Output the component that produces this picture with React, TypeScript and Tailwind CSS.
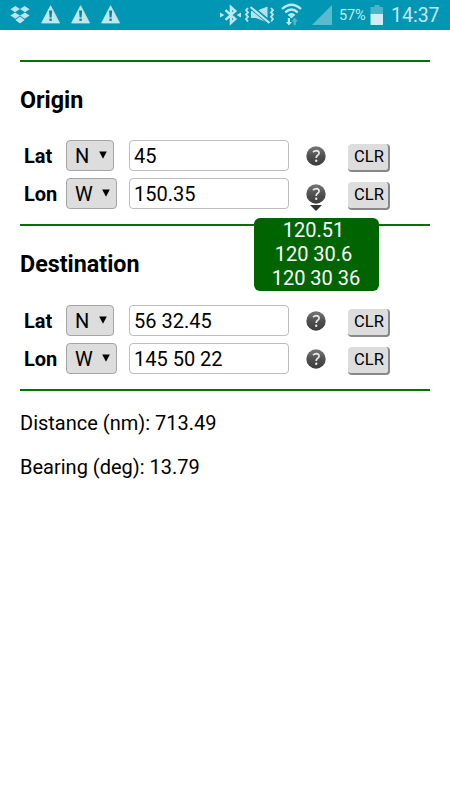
import React from "react";

function Warning() {
  return (
    <svg width="20" height="19" viewBox="0 0 20 19" className="block">
      <path d="M9.6 0.7 L18.6 18 H0.6 Z" fill="#c0e6ee" stroke="#c0e6ee" strokeWidth="0.8" strokeLinejoin="round" />
      <path d="M8.1 5.6h3l-.5 6.8h-2z" fill="#0c809c" />
      <rect x="8.4" y="13.6" width="2.4" height="2.3" fill="#0c809c" />
    </svg>
  );
}

function StatusBar() {
  return (
    <header className="flex h-[30px] items-start bg-[#0096b4]">
      <svg width="20" height="18" viewBox="0 0 20 18" className="ml-[10px] mt-[6px] block" fill="#b9e5ee">
        <path d="M5.4 0 L10 3.1 L5 6.2 L0.4 3.2Z M14.6 0 L19.6 3.2 L15 6.2 L10 3.1Z M5 6.4 L10 9.5 L5.4 12.7 L0.4 9.5Z M15 6.4 L19.6 9.5 L14.6 12.7 L10 9.5Z M10 10.6 L14.7 14 L10 17.6 L5.3 14Z" />
      </svg>
      <div className="ml-[11px] mt-[5px] flex gap-[10px]">
        <Warning />
        <Warning />
        <Warning />
      </div>
      <svg width="21" height="22" viewBox="0 0 21 22" className="ml-[99px] mt-[4px] block" fill="none" stroke="#c0e6ee" strokeWidth="2.4">
        <path d="M5.5 6.2 L15.3 15 L10.9 19 V3 L15.3 7 L5.5 15.8" />
        <path d="M0 8.5 L4.4 11 L0 13.5Z M21 8.5 L16.6 11 L21 13.5Z" fill="#c0e6ee" stroke="none" />
      </svg>
      <svg width="30" height="20" viewBox="0 0 30 20" className="ml-[4px] mt-[5px] block" fill="none" stroke="#c0e6ee">
        <path d="M3 3 L1 5.2 L3 7.4 L1 9.6 L3 11.8 L1 14 L3 16.5" strokeWidth="1.8" />
        <path d="M26 3 L28 5.2 L26 7.4 L28 9.6 L26 11.8 L28 14 L26 16.5" strokeWidth="1.8" />
        <path d="M6 6 H11 L22.5 1.5 V17.5 L11 13 H6Z" fill="#b4e1ea" stroke="none" />
        <path d="M5.5 1.5 L24.5 17.5" stroke="#0096b4" strokeWidth="4.6" />
        <path d="M5.5 2 L24.5 18" strokeWidth="2.2" />
      </svg>
      <svg width="22" height="24" viewBox="0 0 22 24" className="mt-[3px] ml-[6px] block" fill="none" stroke="#c0e6ee" strokeWidth="2.3">
        <path d="M1 6 Q10.5 -2.6 20 6 M4.2 9.4 Q10.5 3.6 16.8 9.4 M7.4 12.6 Q10.5 9.8 13.6 12.6" />
        <path d="M10.5 11.8 L12.6 13.7 L10.5 15.2 L8.4 13.7Z" fill="#c0e6ee" stroke="none" />
        <path d="M6.8 15 H9 V19 H11 L7.9 22.5 L4.8 19 H6.8Z" fill="#c0e6ee" stroke="none" />
        <path d="M12.6 22.2 H14.8 V18.5 H17 L13.7 14.7 L10.8 18.5 H12.6Z" fill="#55b9cd" stroke="none" />
      </svg>
      <svg width="20" height="20" viewBox="0 0 20 20" className="ml-[9px] mt-[5px] block">
        <path d="M0 20 L20 0 V20Z" fill="#5abace" />
      </svg>
      <span className="ml-[7px] mt-[6px] w-[28px] whitespace-nowrap text-[14.5px] leading-[20px] tracking-[-0.1px] text-[#c5e8ef]">57%</span>
      <svg width="14" height="21" viewBox="0 0 14 21" className="ml-[3px] mt-[4px] block">
        <path d="M4.5 1 H9.5 V3 H13 V11 H0.5 V3 H4.5Z" fill="#4bb4c9" />
        <path d="M0.5 10 H13 V21 H0.5Z" fill="#d0edf3" />
      </svg>
      <span className="ml-[7px] mt-[3px] whitespace-nowrap text-[19.5px] leading-[26px] text-[#c5e8ef]">14:37</span>
    </header>
  );
}

function Help() {
  return (
    <svg width="20" height="20" viewBox="0 0 20 20" className="block">
      <defs>
        <linearGradient id="helpShade" x1="0" y1="0" x2="0" y2="1">
          <stop offset="0" stopColor="#777" />
          <stop offset="0.5" stopColor="#505050" />
          <stop offset="1" stopColor="#3c3c3c" />
        </linearGradient>
      </defs>
      <circle cx="10" cy="10" r="9.7" fill="url(#helpShade)" />
      <path d="M7 6.1 Q8.5 4.6 10.3 4.6 Q13.1 4.7 13.1 7 Q13.1 8.5 11.4 9.5 Q10.2 10.3 10.2 12.1" fill="none" stroke="#e8e8e8" strokeWidth="1.7" />
      <circle cx="10.2" cy="14.8" r="1.2" fill="#e8e8e8" />
    </svg>
  );
}

type Field = { label: string; hemisphere: string; value: string; hint?: string[] };

function Row({ label, hemisphere, value, hint }: Field) {
  return (
    <div className="flex h-[31px]">
      <label className="w-[42px] pl-1 text-[20px] font-bold leading-[32px]">{label}</label>
      <div className="w-[66px] pl-[4px]">
        <button
          className={`flex h-[31px] items-center justify-between rounded-[4px] border border-[#a5a5a5] bg-[#dddddd] pl-[8px] pr-[6px] text-[20px] leading-[29px] ${
            hemisphere === "N" ? "w-[48px]" : "w-[51px]"
          }`}
        >
          <span className="pt-[1px]">{hemisphere}</span>
          <svg width="8" height="8" viewBox="0 0 8 8" className="-mt-[1px] block">
            <path d="M0.2 0.5 H7.8 L4 7.8Z" fill="#000" />
          </svg>
        </button>
      </div>
      <input
        defaultValue={value}
        className="ml-[1px] h-[31px] w-[160px] rounded-[4px] border border-[#bdbdbd] bg-white pl-[4px] text-[20px] leading-[29px] outline-none"
      />
      <div className="relative ml-[17px] mt-[6px] h-[20px] w-[20px]">
        <Help />
        {hint && (
          <>
            <svg width="12" height="6" viewBox="0 0 12 6" className="absolute left-[4px] top-[21px]">
              <path d="M0 0 H12 L6 6Z" fill="#333" />
            </svg>
            <div className="absolute left-[-52px] top-[34px] h-[73px] w-[125px] rounded-[6px] bg-[#006400] text-center text-[20px] leading-[24px] text-white">
              {hint.map((line, i) => (
                <div key={line} className={i < hint.length - 1 ? "pr-[6px]" : "pr-[1px]"}>
                  {line}
                </div>
              ))}
            </div>
          </>
        )}
      </div>
      <button className="ml-[22px] mt-[4px] h-[28px] w-[42px] rounded-[4px] border-b-2 border-r-2 border-[#888] bg-[#dddddd] pl-[2px] text-center text-[16.5px] leading-[26px]">
        CLR
      </button>
    </div>
  );
}

function Section({ title, rows, className }: { title: string; rows: Field[]; className: string }) {
  return (
    <section className={`flex flex-col justify-between border-t-2 border-[#007400] pb-[15px] ${className}`}>
      <h2 className="pt-[24px] text-[23.3px] font-bold leading-[28px]">{title}</h2>
      <div className="flex flex-col gap-[7px]">
        {rows.map((row) => (
          <Row key={row.label} {...row} />
        ))}
      </div>
    </section>
  );
}

export default function App() {
  return (
    <div className="h-[800px] w-[450px] overflow-hidden bg-white font-['Roboto',sans-serif] text-black">
      <StatusBar />
      <main className="px-[20px] pt-[30px]">
        <Section
          className="h-[164px]"
          title="Origin"
          rows={[
            { label: "Lat", hemisphere: "N", value: "45" },
            { label: "Lon", hemisphere: "W", value: "150.35", hint: ["120.51", "120 30.6", "120 30 36"] },
          ]}
        />
        <Section
          className="h-[165px]"
          title="Destination"
          rows={[
            { label: "Lat", hemisphere: "N", value: "56 32.45" },
            { label: "Lon", hemisphere: "W", value: "145 50 22" },
          ]}
        />
        <div className="border-t-2 border-[#007400] pt-[20px] text-[20px] leading-[24px]">
          <p>Distance (nm): 713.49</p>
          <p className="mt-[20px]">Bearing (deg): 13.79</p>
        </div>
      </main>
    </div>
  );
}
